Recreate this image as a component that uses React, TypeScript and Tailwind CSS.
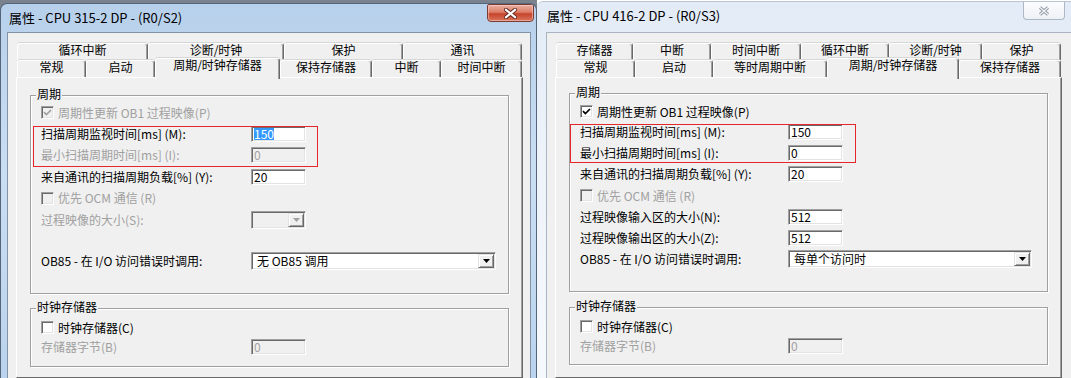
import React from "react";

const SUNKEN =
  "border border-t-[#a0a0a0] border-l-[#a0a0a0] border-r-white border-b-white shadow-[inset_1px_1px_0_#696969,inset_-1px_-1px_0_#e3e3e3]";
const DIS = "text-[#a0a0a0]";

type TabDef = { label: string; w: string; selected?: boolean };

const leftBack: TabDef[] = [
  { label: "循环中断", w: "w-[131px]" },
  { label: "诊断/时钟", w: "w-[136px]" },
  { label: "保护", w: "w-[119px]" },
  { label: "通讯", w: "w-[119px]" },
];
const leftFront: TabDef[] = [
  { label: "常规", w: "w-[69px]" },
  { label: "启动", w: "w-[69px]" },
  { label: "周期/时钟存储器", w: "w-[125px]", selected: true },
  { label: "保持存储器", w: "w-[92px]" },
  { label: "中断", w: "w-[69px]" },
  { label: "时间中断", w: "w-[81px]" },
];
const rightBack: TabDef[] = [
  { label: "存储器", w: "w-[77px]" },
  { label: "中断", w: "w-[78px]" },
  { label: "时间中断", w: "w-[90px]" },
  { label: "循环中断", w: "w-[88px]" },
  { label: "诊断/时钟", w: "w-[93px]" },
  { label: "保护", w: "w-[79px]" },
];
const rightFront: TabDef[] = [
  { label: "常规", w: "w-[79px]" },
  { label: "启动", w: "w-[78px]" },
  { label: "等时周期中断", w: "w-[114px]" },
  { label: "周期/时钟存储器", w: "w-[132px]", selected: true },
  { label: "保持存储器", w: "w-[102px]" },
];

function Tab({ tab }: { tab: TabDef }) {
  if (tab.selected) {
    return (
      <div
        className={`${tab.w} h-[21px] -mb-[2px] relative z-10 shrink-0 flex justify-center bg-[#f0f0f0] border-t border-l border-r border-t-white border-l-white border-r-[#696969] rounded-t-[3px] shadow-[inset_-1px_0_0_#a0a0a0,0_-1px_0_#d6d6d6] leading-[12px] whitespace-nowrap`}
      >
        {tab.label}
      </div>
    );
  }
  return (
    <div
      className={`${tab.w} h-[17px] shrink-0 flex justify-center border-t border-l border-r border-t-white border-l-white border-r-[#696969] rounded-t-[3px] shadow-[inset_-1px_0_0_#a0a0a0,0_-1px_0_#d6d6d6] leading-[12px] whitespace-nowrap`}
    >
      {tab.label}
    </div>
  );
}

function Check({ checked, disabled }: { checked?: boolean; disabled?: boolean }) {
  return (
    <span
      className={`w-[13px] h-[13px] shrink-0 flex items-center justify-center ${SUNKEN} ${
        disabled ? "bg-[#f0f0f0]" : "bg-white"
      }`}
    >
      {checked && (
        <svg width="9" height="9" viewBox="0 0 9 9">
          <path
            d="M1 4.2 L3.4 6.6 L8 2"
            fill="none"
            stroke={disabled ? "#a0a0a0" : "#000"}
            strokeWidth="1.7"
          />
        </svg>
      )}
    </span>
  );
}

function Field({
  value,
  disabled,
  selected,
}: {
  value: string;
  disabled?: boolean;
  selected?: boolean;
}) {
  return (
    <div
      className={`w-[55px] h-[16px] shrink-0 flex items-center pl-[2px] leading-[12px] ${SUNKEN} ${
        disabled ? "bg-[#f0f0f0] text-[#a0a0a0]" : "bg-white text-black"
      }`}
    >
      {selected ? <span className="bg-[#3399ff] text-white">{value}</span> : value}
    </div>
  );
}

function Combo({ value, w, disabled }: { value?: string; w: string; disabled?: boolean }) {
  return (
    <div
      className={`${w} h-[18px] shrink-0 flex items-stretch p-[1px] ${SUNKEN} ${
        disabled ? "bg-[#f0f0f0]" : "bg-white"
      }`}
    >
      <span className="flex-1 pl-[4px] flex items-center leading-[12px] whitespace-nowrap">
        {value}
      </span>
      <span className="w-[16px] flex items-center justify-center bg-[#f0f0f0] border border-t-[#e3e3e3] border-l-[#e3e3e3] border-r-[#696969] border-b-[#696969] shadow-[inset_1px_1px_0_#fff,inset_-1px_-1px_0_#a0a0a0]">
        <svg width="7" height="4" viewBox="0 0 7 4">
          <path d="M0 0h7L3.5 4z" fill={disabled ? "#a0a0a0" : "#000"} />
        </svg>
      </span>
    </div>
  );
}

function Row({
  h,
  lw,
  label,
  disabled,
  children,
}: {
  h: string;
  lw: string;
  label: string;
  disabled?: boolean;
  children: React.ReactNode;
}) {
  return (
    <div className={`flex items-center ${h}`}>
      <span className={`${lw} shrink-0 whitespace-nowrap leading-[12px] ${disabled ? DIS : ""}`}>
        {label}
      </span>
      {children}
    </div>
  );
}

function CheckRow({
  h,
  label,
  checked,
  disabled,
}: {
  h: string;
  label: string;
  checked?: boolean;
  disabled?: boolean;
}) {
  return (
    <div className={`flex items-center gap-[4px] ${h} ${disabled ? DIS : ""}`}>
      <Check checked={checked} disabled={disabled} />
      <span className="leading-[12px] whitespace-nowrap">{label}</span>
    </div>
  );
}

function Group({
  title,
  className,
  lab,
  children,
}: {
  title: string;
  className?: string;
  lab: string;
  children: React.ReactNode;
}) {
  return (
    <div
      className={`relative border border-[#a0a0a0] shadow-[1px_1px_0_#fff,inset_1px_1px_0_#fff] ${className ?? ""}`}
    >
      <div className={`-mt-[8px] ml-[5px] w-fit px-[1px] h-[12px] leading-[12px] bg-[#f0f0f0] ${lab}`}>
        {title}
      </div>
      {children}
    </div>
  );
}

function Window({
  active,
  title,
  back,
  front,
  children,
}: {
  active?: boolean;
  title: string;
  back: TabDef[];
  front: TabDef[];
  children: React.ReactNode;
}) {
  return (
    <div
      className={
        active
          ? "w-[537px] h-[375px] mt-[3px] shrink-0 flex flex-col overflow-hidden rounded-t-[7px] border-l border-r border-t border-[#55657a] bg-[linear-gradient(180deg,#b7d0eb_0%,#cadef3_45%,#bad3ee_100%)] pl-[6px] pr-[5px]"
          : "w-[534px] h-[377px] mt-[1px] shrink-0 flex flex-col overflow-hidden rounded-tl-[6px] border-t border-[#b9c5d3] bg-[linear-gradient(180deg,#e2ebf6_0%,#eef3fa_40%,#f6f9fc_100%)] pl-[9px]"
      }
    >
      {/* Title bar */}
      <div className={active ? "h-[28px] flex shrink-0" : "h-[30px] flex shrink-0"}>
        <span
          className={`self-center whitespace-nowrap text-[13px] leading-[14px] ${
            active ? "ml-[2px]" : "ml-[1px] -mt-[2px]"
          }`}
        >
          {title}
        </span>
        {active ? (
          <div className="ml-auto -mr-[3px] w-[47px] h-[18px] rounded-b-[4px] rounded-t-[2px] border border-[#7c3b32] bg-[linear-gradient(180deg,#eab0a3_0%,#dc7d67_45%,#c7432c_55%,#d8765c_100%)] shadow-[inset_0_0_0_1px_rgba(255,220,210,0.5)] flex items-center justify-center">
            <svg width="13" height="11" viewBox="0 0 13 11">
              <path d="M2 1.8 L11 9.2 M11 1.8 L2 9.2" stroke="#5b2018" strokeWidth="4" strokeLinecap="square" />
              <path d="M2 1.8 L11 9.2 M11 1.8 L2 9.2" stroke="#fff" strokeWidth="2.2" strokeLinecap="square" />
            </svg>
          </div>
        ) : (
          <div className="ml-auto mr-[6px] w-[42px] h-[18px] rounded-b-[4px] border border-t-0 border-[#aeb8c4] bg-[linear-gradient(180deg,#fbfcfe,#eef2f7)] flex items-center justify-center">
            <svg width="12" height="10" viewBox="0 0 12 10">
              <path d="M2 1.5 L10 8.5 M10 1.5 L2 8.5" stroke="#8c949e" strokeWidth="3" />
              <path d="M2 1.5 L10 8.5 M10 1.5 L2 8.5" stroke="#f4f6f9" strokeWidth="1.2" />
            </svg>
          </div>
        )}
      </div>

      {/* Client area */}
      <div
        className={
          active
            ? "flex-1 flex flex-col bg-[#f0f0f0] border-t border-l border-r border-[#8393a6] pt-[10px] pl-[8px] pr-[7px]"
            : "flex-1 flex flex-col bg-[#f0f0f0] border-t border-l border-[#a9b5c2] pt-[10px] pl-[8px]"
        }
      >
        <div className="w-[507px] flex-1 flex flex-col">
          <div className="flex h-[17px] ml-[1px]">
            {back.map((t) => (
              <Tab key={t.label} tab={t} />
            ))}
          </div>
          <div className="flex items-end h-[17px] ml-[1px]">
            {front.map((t) => (
              <Tab key={t.label} tab={t} />
            ))}
          </div>
          <div
            className={`flex-1 flex flex-col bg-[#f0f0f0] border border-t-white border-l-white border-r-[#696969] border-b-[#696969] shadow-[inset_-1px_0_0_#a0a0a0] px-[13px] ${
              active ? "pt-[17px]" : "pt-[15px]"
            }`}
          >
            {children}
          </div>
        </div>
      </div>
    </div>
  );
}

function LeftContent() {
  const lw = "w-[210px]";
  return (
    <>
      <Group title="周期" lab="mb-[2px]">
        <div className="flex flex-col pl-[10px] pb-[21px]">
          <CheckRow h="h-[21px]" label="周期性更新 OB1 过程映像(P)" checked disabled />
          <Row h="h-[21px]" lw={lw} label="扫描周期监视时间[ms] (M):">
            <Field value="150" selected />
          </Row>
          <Row h="h-[22px]" lw={lw} label="最小扫描周期时间[ms] (I):" disabled>
            <Field value="0" disabled />
          </Row>
          <Row h="h-[21px]" lw={lw} label="来自通讯的扫描周期负载[%] (Y):">
            <Field value="20" />
          </Row>
          <CheckRow h="h-[22px]" label="优先 OCM 通信 (R)" disabled />
          <Row h="h-[21px]" lw={lw} label="过程映像的大小(S):" disabled>
            <Combo w="w-[55px]" disabled />
          </Row>
          <Row h="h-[22px] mt-[20px]" lw={lw} label="OB85 - 在 I/O 访问错误时调用:">
            <Combo w="w-[245px]" value="无 OB85 调用" />
          </Row>
        </div>
        <div className="absolute left-[2px] top-[30px] w-[285px] h-[41px] border border-[#e5262b]" />
      </Group>
      <Group title="时钟存储器" className="mt-[14px]" lab="mb-[4px]">
        <div className="flex flex-col pl-[10px] pb-[10px]">
          <CheckRow h="h-[21px]" label="时钟存储器(C)" />
          <Row h="h-[18px]" lw={lw} label="存储器字节(B)" disabled>
            <Field value="0" disabled />
          </Row>
        </div>
      </Group>
    </>
  );
}

function RightContent() {
  const lw = "w-[208px]";
  return (
    <>
      <Group title="周期" lab="mb-[3px]">
        <div className="flex flex-col pl-[10px] pb-[21px]">
          <CheckRow h="h-[21px]" label="周期性更新 OB1 过程映像(P)" checked />
          <Row h="h-[20px]" lw={lw} label="扫描周期监视时间[ms] (M):">
            <Field value="150" />
          </Row>
          <Row h="h-[21px]" lw={lw} label="最小扫描周期时间[ms] (I):">
            <Field value="0" />
          </Row>
          <Row h="h-[22px]" lw={lw} label="来自通讯的扫描周期负载[%] (Y):">
            <Field value="20" />
          </Row>
          <CheckRow h="h-[21px]" label="优先 OCM 通信 (R)" disabled />
          <Row h="h-[21px]" lw={lw} label="过程映像输入区的大小(N):">
            <Field value="512" />
          </Row>
          <Row h="h-[21px]" lw={lw} label="过程映像输出区的大小(Z):">
            <Field value="512" />
          </Row>
          <Row h="h-[22px]" lw={lw} label="OB85 - 在 I/O 访问错误时调用:">
            <Combo w="w-[244px]" value="每单个访问时" />
          </Row>
        </div>
        <div className="absolute left-0 top-[30px] w-[286px] h-[39px] border border-[#e5262b]" />
      </Group>
      <Group title="时钟存储器" className="mt-[15px]" lab="mb-[4px]">
        <div className="flex flex-col pl-[10px] pb-[10px]">
          <CheckRow h="h-[21px]" label="时钟存储器(C)" />
          <Row h="h-[17px]" lw={lw} label="存储器字节(B)" disabled>
            <Field value="0" disabled />
          </Row>
        </div>
      </Group>
    </>
  );
}

export default function App() {
  return (
    <div className="w-[1071px] h-[378px] overflow-hidden flex bg-white text-[12px] text-black [font-family:'Noto_Sans_CJK_SC',sans-serif]">
      <div className="w-[537px] h-full shrink-0 bg-[#7a838d]">
        <Window active title="属性 - CPU 315-2 DP - (R0/S2)" back={leftBack} front={leftFront}>
          <LeftContent />
        </Window>
      </div>
      <Window title="属性 - CPU 416-2 DP - (R0/S3)" back={rightBack} front={rightFront}>
        <RightContent />
      </Window>
    </div>
  );
}
